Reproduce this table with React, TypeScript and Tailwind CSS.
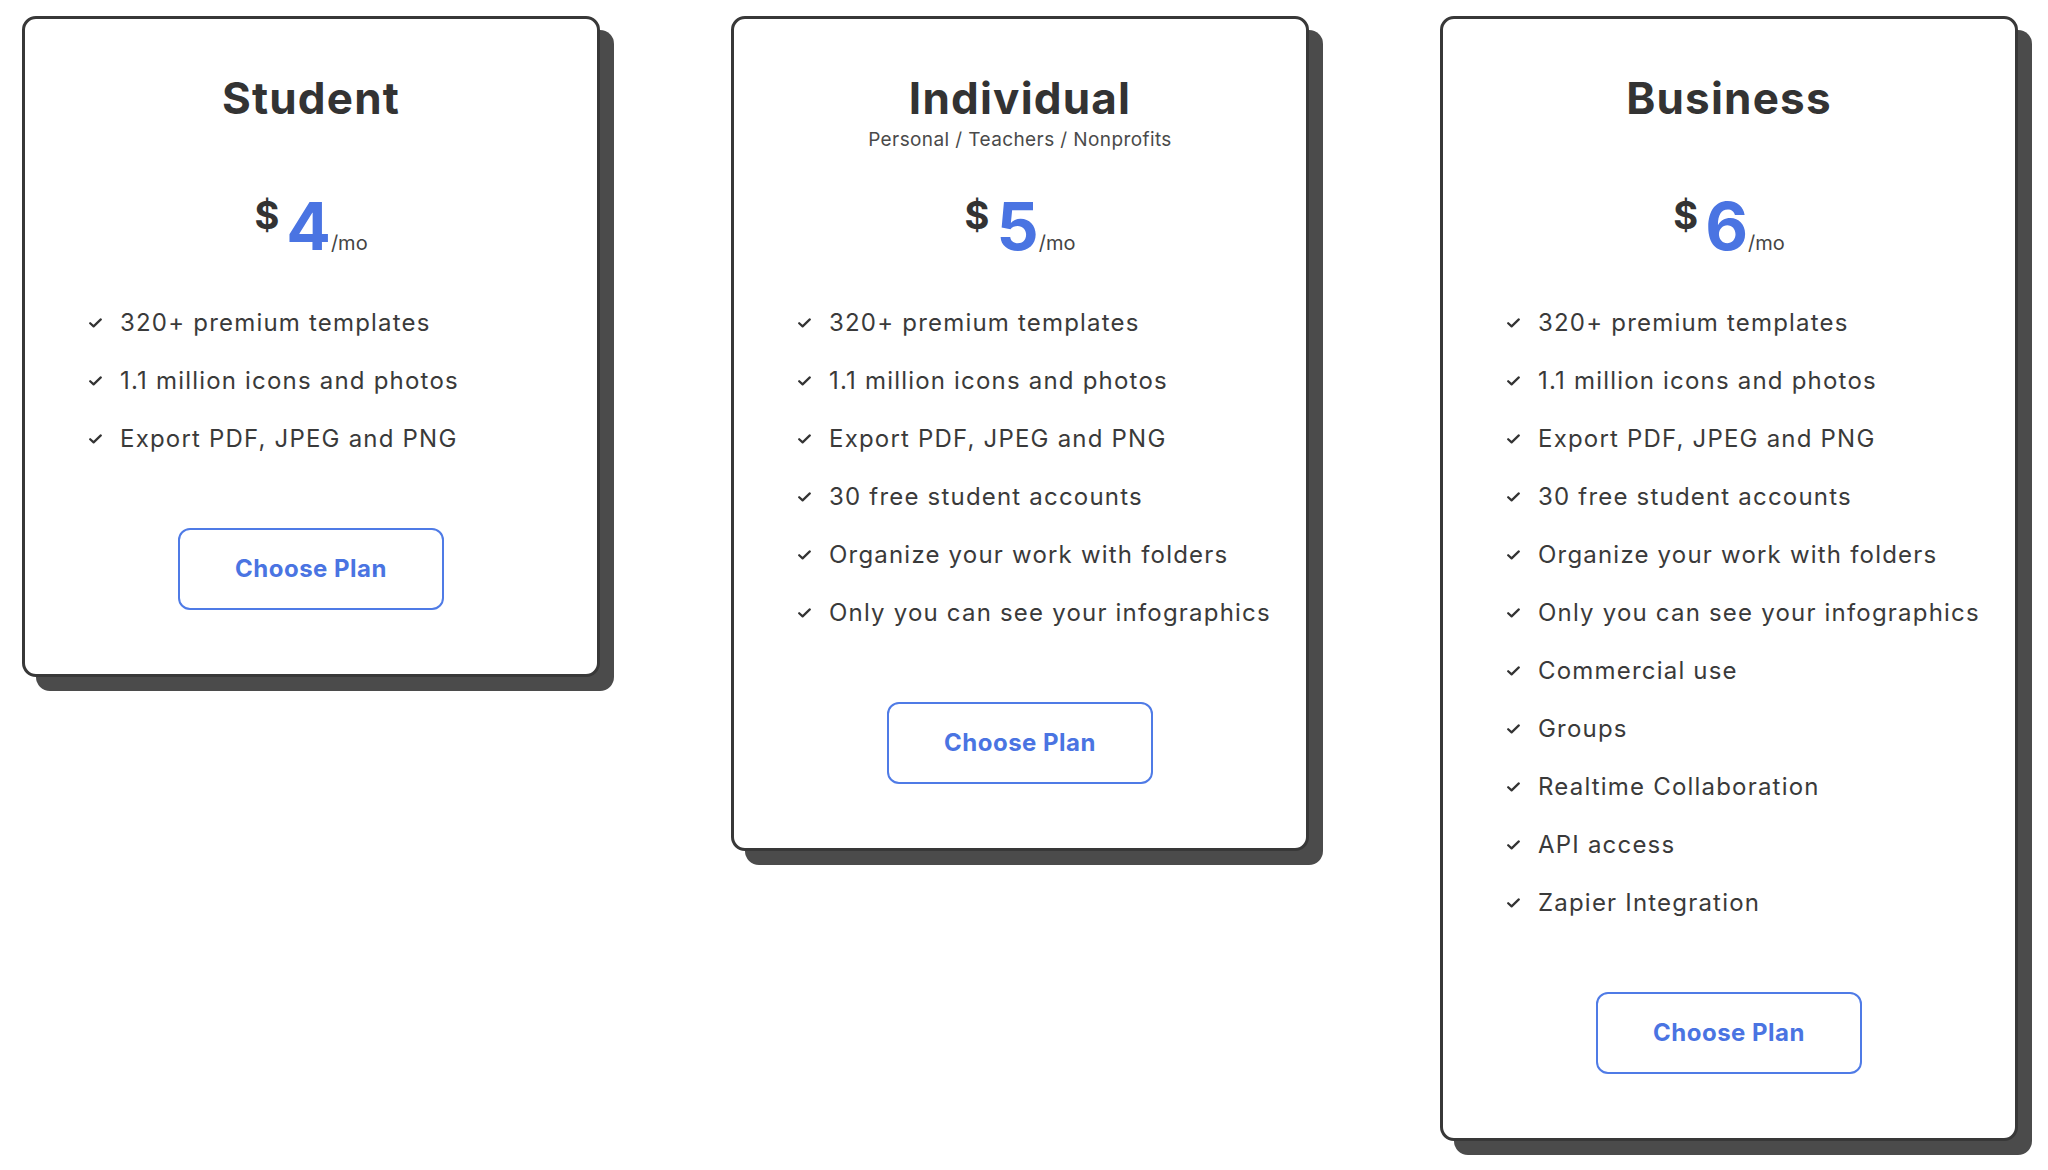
import React from "react";

type Plan = { name: string; subtitle?: string; price: string; features: string[] };

const base = [
  "320+ premium templates",
  "1.1 million icons and photos",
  "Export PDF, JPEG and PNG",
];
const indiv = [
  ...base,
  "30 free student accounts",
  "Organize your work with folders",
  "Only you can see your infographics",
];
const biz = [
  ...indiv,
  "Commercial use",
  "Groups",
  "Realtime Collaboration",
  "API access",
  "Zapier Integration",
];

const plans: Plan[] = [
  { name: "Student", price: "4", features: base },
  { name: "Individual", subtitle: "Personal / Teachers / Nonprofits", price: "5", features: indiv },
  { name: "Business", price: "6", features: biz },
];

function Check() {
  return (
    <svg width="13" height="10" viewBox="0 0 13 10" fill="none" className="shrink-0">
      <path d="M1.2 5.2 L4.6 8.4 L11.8 1.4" stroke="#333" strokeWidth="2.2" strokeLinecap="round" strokeLinejoin="round" />
    </svg>
  );
}

function Card({ plan }: { plan: Plan }) {
  return (
    <div className="w-[578px] shrink-0 bg-white border-[3px] border-[#383838] rounded-[14px] shadow-[14px_14px_0_#4b4b4b] pt-[58px] pb-[64px] flex flex-col">
      <div className="h-[116px] flex flex-col items-center">
        <h2 className="text-[44px] leading-[42px] font-bold text-[#333] tracking-[1.2px]">{plan.name}</h2>
        {plan.subtitle && (
          <p className="mt-[9px] text-[19px] leading-[24px] text-[#4a4a4a] tracking-[0.4px]">{plan.subtitle}</p>
        )}
      </div>
      <div className="h-[66px] flex items-start justify-center">
        <span className="mt-[3px] mr-[7px] text-[38px] leading-none font-bold text-[#333]">$</span>
        <div className="flex items-baseline">
          <span className="text-[66px] leading-[66px] font-bold text-[#4a74e2]">{plan.price}</span>
          <span className="text-[20px] leading-none text-[#444]">/mo</span>
        </div>
      </div>
      <ul className="mt-[35px] px-[64px] flex flex-col">
        {plan.features.map((f) => (
          <li key={f} className="h-[58px] flex items-center gap-[18px]">
            <Check />
            <span className="text-[24px] text-[#3a3a3a] tracking-[1.2px] whitespace-nowrap">{f}</span>
          </li>
        ))}
      </ul>
      <button className="mt-[60px] mx-auto w-[266px] h-[82px] border-2 border-[#4f7be6] rounded-[12px] bg-white text-[24px] font-bold text-[#4a74e2] tracking-[0.5px]">
        Choose Plan
      </button>
    </div>
  );
}

export default function App() {
  return (
    <div
      className="min-h-[1170px] w-[2048px] bg-white pl-[22px] pt-[16px] flex items-start gap-[131px]"
      style={{ fontFamily: "Inter, 'Noto Sans', sans-serif" }}
    >
      {plans.map((p) => (
        <Card key={p.name} plan={p} />
      ))}
    </div>
  );
}
